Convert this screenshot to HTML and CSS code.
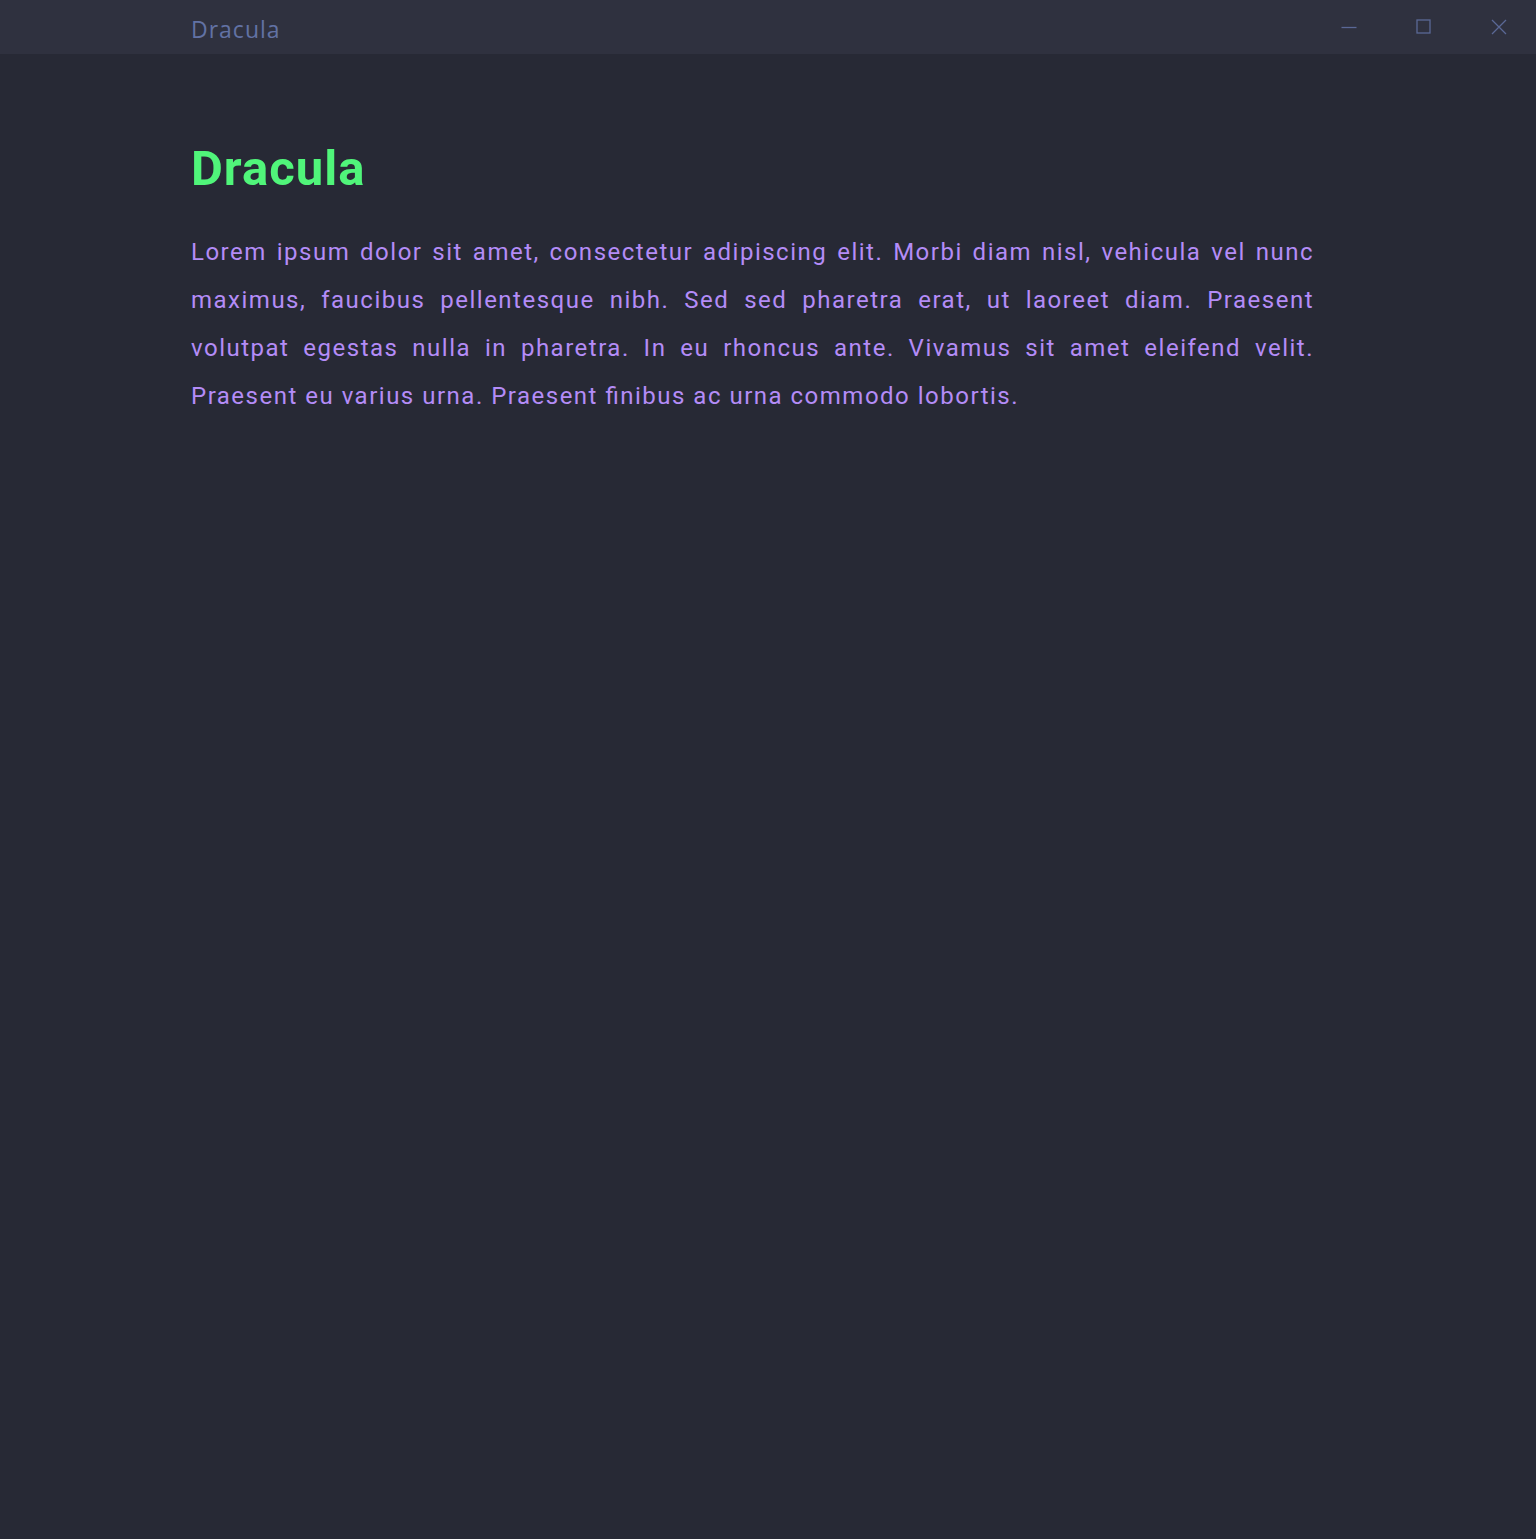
FILE: index.html
```html
<!DOCTYPE html>
<html lang="en">
<head>
<meta charset="utf-8">
<title>Dracula</title>
<link rel="stylesheet" href="styles.css">
</head>
<body>
<header class="titlebar">
  <div class="titlebar-title">Dracula</div>
  <div class="window-controls">
    <button class="wc" aria-label="Minimize">
      <svg width="16" height="16" viewBox="0 0 16 16"><path d="M0.5 8.5H15.5" stroke="#5a6896" stroke-width="1.3" fill="none"/></svg>
    </button>
    <button class="wc" aria-label="Maximize">
      <svg width="16" height="16" viewBox="0 0 16 16"><rect x="1" y="1" width="13" height="13" stroke="#5a6896" stroke-width="1.3" fill="none"/></svg>
    </button>
    <button class="wc" aria-label="Close">
      <svg width="16" height="16" viewBox="0 0 16 16"><path d="M1 1L15 15M15 1L1 15" stroke="#5a6896" stroke-width="1.3" fill="none"/></svg>
    </button>
  </div>
</header>
<main class="content">
  <h1 class="heading">Dracula</h1>
  <p class="text">Lorem ipsum dolor sit amet, consectetur adipiscing elit. Morbi diam nisl, vehicula vel nunc maximus, faucibus pellentesque nibh. Sed sed pharetra erat, ut laoreet diam. Praesent volutpat egestas nulla in pharetra. In eu rhoncus ante. Vivamus sit amet eleifend velit. Praesent eu varius urna. Praesent ﬁnibus ac urna commodo lobortis.</p>
</main>
</body>
</html>
```
FILE: styles.css
```css
html, body {
  margin: 0;
  padding: 0;
  background: #272935;
  height: 100%;
}
body {
  font-family: Roboto, "Liberation Sans", sans-serif;
}
.titlebar {
  height: 54px;
  background: #2f313f;
  display: flex;
  align-items: center;
  justify-content: space-between;
  padding-left: 191px;
}
.titlebar-title {
  font-family: "Open Sans", "Noto Sans", sans-serif;
  font-size: 23px;
  letter-spacing: 1px;
  color: #6272a4;
  padding-top: 3px;
}
.window-controls {
  display: flex;
  align-self: flex-start;
  padding-top: 19px;
  padding-right: 29px;
  gap: 59px;
}
.wc {
  border: 0;
  background: none;
  padding: 0;
  width: 16px;
  height: 16px;
  display: block;
}
.wc svg { display: block; }
.content {
  padding: 0 222px 0 191px;
}
.heading {
  margin: 0;
  padding-top: 86px;
  font-size: 49px;
  font-weight: 700;
  letter-spacing: 1px;
  color: #50f57a;
  line-height: 58px;
}
.text {
  margin: 30px 0 0;
  font-size: 24px;
  line-height: 48px;
  letter-spacing: 1.5px;
  color: #b48cf7;
  text-align: justify;
}
```
